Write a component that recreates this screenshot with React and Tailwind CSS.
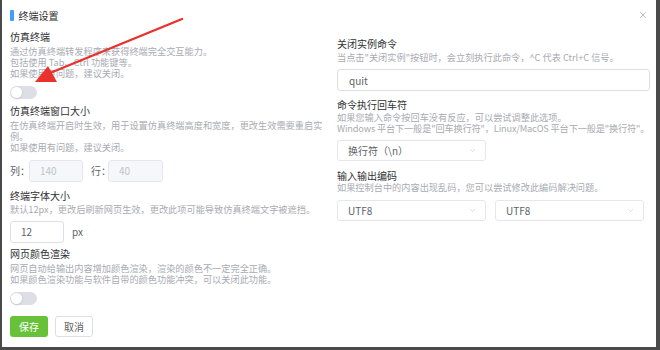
import React from 'react';
import { X, ChevronDown } from 'lucide-react';

const Title = ({ children, className = '' }) => (
  <div className={`text-[10px] leading-[14px] text-[#303133] whitespace-nowrap ${className}`}>{children}</div>
);

const Desc = ({ children, className = '' }) => (
  <div className={`text-[9.2px] leading-[11px] text-[#a8abb2] whitespace-nowrap ${className}`}>{children}</div>
);

const Toggle = ({ className = '' }) => (
  <div className={`w-[27px] h-[13px] rounded-full bg-[#dcdfe6] flex items-center px-[1px] ${className}`}>
    <div className="w-[11px] h-[11px] rounded-full bg-white shadow-sm" />
  </div>
);

const Select = ({ value, className = '' }) => (
  <div className={`h-[21px] w-[149px] border border-[#e4e7ed] rounded-[3px] flex items-center justify-between pl-[10px] pr-[8px] text-[10px] text-[#606266] ${className}`}>
    <span>{value}</span>
    <ChevronDown className="w-[9px] h-[9px] text-[#c0c4cc]" strokeWidth={1.5} />
  </div>
);

export default function App() {
  return (
    <div className="w-[660px] h-[350px] bg-[#4a4a4a] overflow-hidden font-['Noto_Sans_CJK_SC',sans-serif]">
      <div className="relative ml-[2px] w-[654px] h-[347px] bg-white pl-[8px] pr-[6px]">
        {/* Header */}
        <div className="h-[30px] flex items-center justify-between">
          <div className="flex items-center gap-[5px]">
            <div className="w-[3.5px] h-[11px] rounded-[1px] bg-[#409eff]" />
            <span className="text-[10px] text-[#303133]">终端设置</span>
          </div>
          <X className="w-[10px] h-[10px] text-[#909399] mr-[2px]" strokeWidth={1.5} />
        </div>

        <div className="grid grid-cols-[310px_313px] gap-x-[17px]">
          {/* Left column */}
          <div className="flex flex-col items-start">
            <Title>仿真终端</Title>
            <Desc className="mt-[1.5px]">
              <div>通过仿真终端转发程序来获得终端完全交互能力。</div>
              <div>包括使用 Tab、Ctrl 功能键等。</div>
              <div>如果使用有问题，建议关闭。</div>
            </Desc>
            <Toggle className="mt-[7px]" />

            <Title className="mt-[5px]">仿真终端窗口大小</Title>
            <Desc className="mt-[2px]">
              <div>在仿真终端开启时生效，用于设置仿真终端高度和宽度，更改生效需要重启实</div>
              <div>例。</div>
              <div>如果使用有问题，建议关闭。</div>
            </Desc>
            <div className="mt-[7px] flex items-center text-[10px] text-[#606266]">
              <span className="w-[19px]">列：</span>
              <div className="w-[54px] h-[22px] border border-[#e4e7ed] bg-[#f5f7fa] rounded-[3px] flex items-center pl-[10px] text-[#c0c4cc]">140</div>
              <span className="ml-[8px] w-[17px]">行：</span>
              <div className="w-[55px] h-[22px] border border-[#e4e7ed] bg-[#f5f7fa] rounded-[3px] flex items-center pl-[10px] text-[#c0c4cc]">40</div>
            </div>

            <Title className="mt-[7px]">终端字体大小</Title>
            <Desc className="mt-[1px]">
              <div>默认12px，更改后刷新网页生效，更改此项可能导致仿真终端文字被遮挡。</div>
            </Desc>
            <div className="mt-[6px] flex items-center text-[10px] text-[#606266]">
              <div className="w-[54px] h-[22px] border border-[#dcdfe6] rounded-[3px] flex items-center pl-[10px]">12</div>
              <span className="ml-[8px]">px</span>
            </div>

            <Title className="mt-[4px]">网页颜色渲染</Title>
            <Desc className="mt-[2px]">
              <div>网页自动给输出内容增加颜色渲染，渲染的颜色不一定完全正确。</div>
              <div>如果颜色渲染功能与软件自带的颜色功能冲突，可以关闭此功能。</div>
            </Desc>
            <Toggle className="mt-[7px]" />

            <div className="mt-[11px] flex gap-[7px] text-[10px]">
              <div className="w-[38px] h-[21px] rounded-[3px] bg-[#67c23a] text-white flex items-center justify-center">保存</div>
              <div className="w-[38px] h-[21px] rounded-[3px] border border-[#dcdfe6] text-[#606266] flex items-center justify-center">取消</div>
            </div>
          </div>

          {/* Right column */}
          <div className="flex flex-col items-start pt-[7px]">
            <Title>关闭实例命令</Title>
            <Desc className="mt-[1px]">
              <div>当点击"关闭实例"按钮时，会立刻执行此命令，^C 代表 Ctrl+C 信号。</div>
            </Desc>
            <div className="mt-[6px] w-[313px] h-[22px] border border-[#dcdfe6] rounded-[3px] flex items-center pl-[11px] text-[10px] text-[#606266]">quit</div>

            <Title className="mt-[7px]">命令执行回车符</Title>
            <Desc className="leading-[11.5px]">
              <div>如果您输入命令按回车没有反应，可以尝试调整此选项。</div>
              <div className="tracking-[-0.15px]">Windows 平台下一般是"回车换行符"，Linux/MacOS 平台下一般是"换行符"。</div>
            </Desc>
            <Select value="换行符（\n）" className="mt-[6px]" />

            <Title className="mt-[8px]">输入输出编码</Title>
            <Desc className="-mt-[1px]">
              <div>如果控制台中的内容出现乱码，您可以尝试修改此编码解决问题。</div>
            </Desc>
            <div className="mt-[7px] flex gap-[9px]">
              <Select value="UTF8" />
              <Select value="UTF8" />
            </div>
          </div>
        </div>

        {/* Red annotation arrow */}
        <svg className="absolute left-[-2px] top-0 pointer-events-none" width="200" height="100" viewBox="0 0 200 100">
          <path d="M182 19 L50 73" stroke="#e8322b" strokeWidth="2.4" strokeLinecap="round" />
          <polygon points="35,82 48,66 57,82" fill="#e8322b" />
        </svg>
      </div>
    </div>
  );
}
